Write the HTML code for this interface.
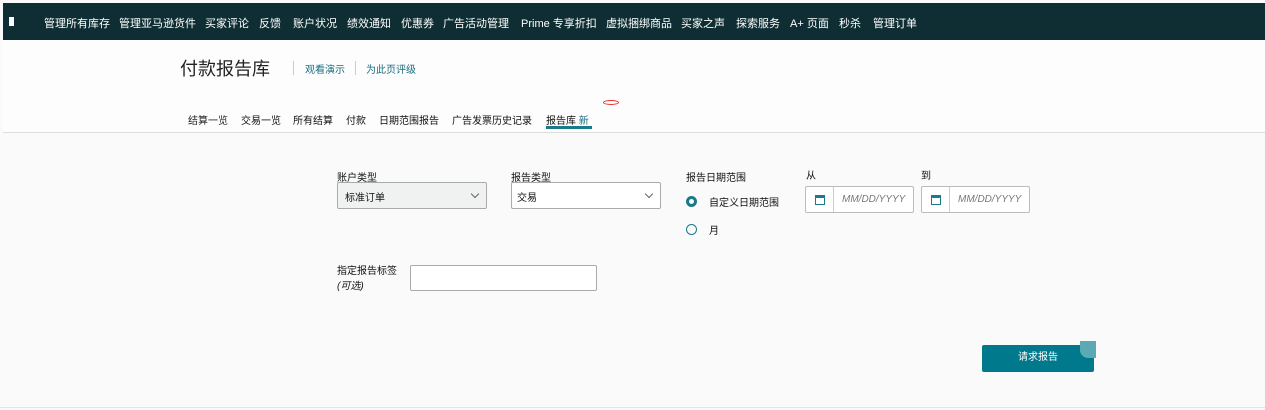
<!DOCTYPE html>
<html><head><meta charset="utf-8"><style>
*{margin:0;padding:0;box-sizing:border-box}
body{width:1265px;height:410px;background:#fafafa;font-family:"Liberation Sans","Noto Sans CJK SC",sans-serif;position:relative;overflow:hidden;color:#111}
.nav{position:absolute;left:3px;top:3px;right:0;height:37px;background:#0e2e33;color:#fff;font-size:11px}
.nav span{position:absolute;top:12px;white-space:nowrap}
.hdr{position:absolute;left:3px;top:40px;right:0;height:93px;background:#fdfdfd;border-bottom:1px solid #ddd}
.a{position:absolute;white-space:nowrap}
.lbl{font-size:10px;color:#111}
.box{position:absolute;border:1px solid #aaa;border-radius:2px;background:#fff;font-size:10px}
.sel{background:#f0f1f1}
.chev{position:absolute;right:8px;top:8px;width:6px;height:6px;border-right:1px solid #666;border-bottom:1px solid #666;transform:rotate(45deg)}
.cal{position:absolute;left:0;top:0;width:28px;height:100%;border-right:1px solid #ccc}
.cal i{position:absolute;left:9px;top:8px;width:10px;height:10px;border:1.5px solid #1a7a8c;border-top-width:3px}
.ph{position:absolute;left:36px;top:7px;font-style:italic;color:#777;font-size:10px}
</style></head><body>
<div class="nav">
<div style="position:absolute;left:6px;top:14px;width:5px;height:9px;background:#fff"></div>
<span style="left:41px">管理所有库存</span><span style="left:116px">管理亚马逊货件</span><span style="left:202px">买家评论</span><span style="left:256px">反馈</span><span style="left:290px">账户状况</span><span style="left:344px">绩效通知</span><span style="left:398px">优惠券</span><span style="left:440px">广告活动管理</span><span style="left:518px">Prime 专享折扣</span><span style="left:603px">虚拟捆绑商品</span><span style="left:678px">买家之声</span><span style="left:733px">探索服务</span><span style="left:787px">A+ 页面</span><span style="left:836px">秒杀</span><span style="left:870px">管理订单</span>
</div>
<div class="hdr">
<div class="a" style="left:177px;top:15px;font-size:18px;color:#222">付款报告库</div>
<div class="a" style="left:290px;top:21px;width:1px;height:14px;background:#ccc"></div>
<div class="a" style="left:302px;top:21px;font-size:10px;color:#1a6e80">观看演示</div>
<div class="a" style="left:352px;top:21px;width:1px;height:14px;background:#ccc"></div>
<div class="a" style="left:363px;top:21px;font-size:10px;color:#1a6e80">为此页评级</div>
<div class="a" style="left:600px;top:60px;width:16px;height:5px;border:1px solid #e33;border-radius:50%"></div>
<div class="a" style="left:185px;top:72px;font-size:10px;color:#222">结算一览</div>
<div class="a" style="left:238px;top:72px;font-size:10px">交易一览</div>
<div class="a" style="left:290px;top:72px;font-size:10px">所有结算</div>
<div class="a" style="left:343px;top:72px;font-size:10px">付款</div>
<div class="a" style="left:376px;top:72px;font-size:10px">日期范围报告</div>
<div class="a" style="left:449px;top:72px;font-size:10px">广告发票历史记录</div>
<div class="a" style="left:543px;top:72px;font-size:10px">报告库 <span style="color:#1a6e80">新</span></div>
<div class="a" style="left:543px;top:86px;width:46px;height:3px;background:#1a7a8c"></div>
</div>
<div class="a lbl" style="left:337px;top:169px">账户类型</div>
<div class="box sel" style="left:337px;top:182px;width:150px;height:27px"><span class="a" style="left:7px;top:6px">标准订单</span><div class="chev"></div></div>
<div class="a lbl" style="left:511px;top:169px">报告类型</div>
<div class="box" style="left:511px;top:182px;width:150px;height:27px"><span class="a" style="left:5px;top:6px">交易</span><div class="chev"></div></div>
<div class="a lbl" style="left:686px;top:169px">报告日期范围</div>
<div class="a" style="left:686px;top:196px;width:11px;height:11px;border:3px solid #1a7a8c;border-radius:50%"></div>
<div class="a lbl" style="left:709px;top:194px">自定义日期范围</div>
<div class="a" style="left:686px;top:224px;width:11px;height:11px;border:1px solid #1a7a8c;border-radius:50%"></div>
<div class="a lbl" style="left:709px;top:222px">月</div>
<div class="a lbl" style="left:806px;top:167px">从</div>
<div class="box" style="left:805px;top:186px;width:109px;height:27px;border-color:#bbb"><div class="cal"><i></i></div><span class="ph">MM/DD/YYYY</span></div>
<div class="a lbl" style="left:921px;top:167px">到</div>
<div class="box" style="left:921px;top:186px;width:109px;height:27px;border-color:#bbb"><div class="cal"><i></i></div><span class="ph">MM/DD/YYYY</span></div>
<div class="a lbl" style="left:337px;top:264px;line-height:15px">指定报告标签<br><i>(可选)</i></div>
<div class="box" style="left:410px;top:265px;width:187px;height:26px"></div>
<div class="a" style="left:982px;top:345px;width:112px;height:27px;background:#00798c;border-radius:2px;color:#fff;font-size:10px;text-align:center;line-height:25px">请求报告</div>
<div class="a" style="left:1080px;top:341px;width:16px;height:17px;background:#5aa9b5;border-radius:0 0 0 8px"></div>
<div class="a" style="left:0;top:407px;width:1265px;height:1px;background:#dde8ea"></div>
</body></html>
